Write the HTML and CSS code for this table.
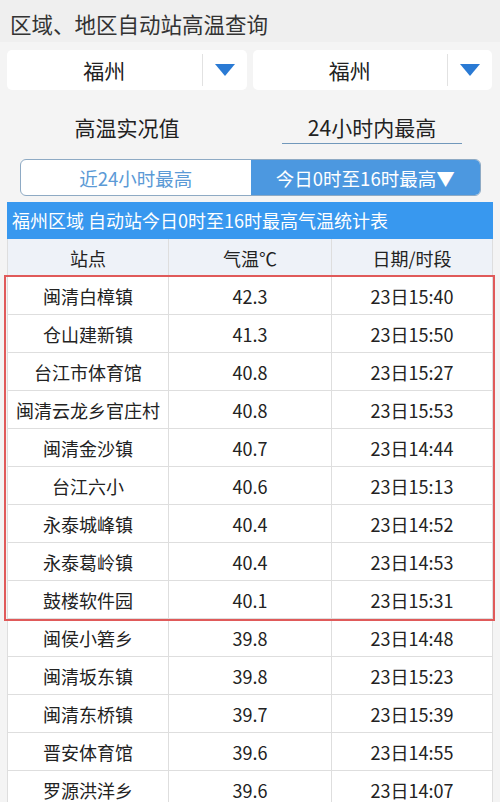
FILE: index.html
```html
<!DOCTYPE html>
<html lang="zh">
<head>
<meta charset="utf-8">
<link rel="stylesheet" href="styles.css">
</head>
<body>
<div class="title">区域、地区自动站高温查询</div>
<div class="selects">
  <div class="select"><span class="sel-text">福州</span><span class="sel-btn"><svg width="20" height="12" viewBox="0 0 20 12"><polygon points="0,0 20,0 10,12" fill="#2a7ad4"/></svg></span></div>
  <div class="select"><span class="sel-text">福州</span><span class="sel-btn"><svg width="20" height="12" viewBox="0 0 20 12"><polygon points="0,0 20,0 10,12" fill="#2a7ad4"/></svg></span></div>
</div>
<div class="tabs">
  <div class="tab">高温实况值</div>
  <div class="tab active">24小时内最高</div>
</div>
<div class="segment">
  <div class="seg">近24小时最高</div>
  <div class="seg on">今日0时至16时最高▼</div>
</div>
<div class="table-wrap">
  <div class="caption">福州区域 自动站今日0时至16时最高气温统计表</div>
  <div class="row head"><div>站点</div><div>气温℃</div><div>日期/时段</div></div>
  <div class="row"><div>闽清白樟镇</div><div>42.3</div><div>23日15:40</div></div>
  <div class="row"><div>仓山建新镇</div><div>41.3</div><div>23日15:50</div></div>
  <div class="row"><div>台江市体育馆</div><div>40.8</div><div>23日15:27</div></div>
  <div class="row"><div>闽清云龙乡官庄村</div><div>40.8</div><div>23日15:53</div></div>
  <div class="row"><div>闽清金沙镇</div><div>40.7</div><div>23日14:44</div></div>
  <div class="row"><div>台江六小</div><div>40.6</div><div>23日15:13</div></div>
  <div class="row"><div>永泰城峰镇</div><div>40.4</div><div>23日14:52</div></div>
  <div class="row"><div>永泰葛岭镇</div><div>40.4</div><div>23日14:53</div></div>
  <div class="row"><div>鼓楼软件园</div><div>40.1</div><div>23日15:31</div></div>
  <div class="row"><div>闽侯小箬乡</div><div>39.8</div><div>23日14:48</div></div>
  <div class="row"><div>闽清坂东镇</div><div>39.8</div><div>23日15:23</div></div>
  <div class="row"><div>闽清东桥镇</div><div>39.7</div><div>23日15:39</div></div>
  <div class="row"><div>晋安体育馆</div><div>39.6</div><div>23日14:55</div></div>
  <div class="row"><div>罗源洪洋乡</div><div>39.6</div><div>23日14:07</div></div>
  <div class="highlight"></div>
</div>
</body>
</html>
```
FILE: styles.css
```css
html, body {
  margin: 0;
  padding: 0;
  background: #f4f4f4;
  font-family: "Noto Sans CJK SC", "Noto Sans", sans-serif;
  color: #222;
  overflow: hidden;
}
.title {
  height: 42px;
  box-sizing: border-box;
  padding: 5px 0 0 10px;
  display: flex;
  align-items: center;
  font-size: 21.5px;
  color: #333;
  background: #efefef;
}
.selects {
  display: flex;
  gap: 6px;
  padding: 8px 8px 0 7px;
}
.select {
  flex: 1;
  height: 40px;
  background: #fff;
  border-radius: 5px;
  display: flex;
  align-items: center;
}
.sel-text {
  flex: 1;
  text-align: center;
  font-size: 21px;
  color: #222;
}
.sel-btn {
  width: 44px;
  height: 32px;
  border-left: 1px solid #e2e2e2;
  display: flex;
  align-items: center;
  justify-content: center;
}
.tabs {
  display: flex;
  align-items: flex-start;
  height: 60px;
}
.tab {
  height: 52px;
  box-sizing: border-box;
  padding-top: 24px;
  line-height: 26px;
  text-align: center;
  font-size: 21px;
  color: #222;
}
.tab:first-child {
  width: 254px;
}
.active {
  width: 180px;
  margin-left: 28px;
  height: 54px;
  border-bottom: 1.5px solid #7198bb;
}
.segment {
  display: flex;
  margin: 9px 19px 0 20px;
  height: 35px;
  border: 1px solid #8eaac4;
  border-radius: 6px;
  overflow: hidden;
  background: #fff;
}
.seg {
  flex: 1;
  display: flex;
  align-items: center;
  justify-content: center;
  font-size: 18.5px;
  color: #5b9ad6;
}
.seg.on {
  background: #4c98e0;
  color: #fff;
}
.table-wrap {
  position: relative;
  margin: 6px 7px 0 7px;
}
.caption {
  height: 37px;
  line-height: 37px;
  background: #3898ef;
  color: #fff;
  font-size: 18px;
  padding-left: 5px;
}
.row {
  display: grid;
  grid-template-columns: 161px 163px 1fr;
  height: 38px;
  background: #fff;
  border-bottom: 1px solid #dedede;
  box-sizing: border-box;
}
.row > div {
  display: flex;
  align-items: center;
  justify-content: center;
  font-size: 18px;
  color: #222;
  border-left: 1px solid #dedede;
}
.row > div:last-child {
  border-right: 1px solid #dedede;
}
.row.head {
  background: #eef2f8;
}
.highlight {
  position: absolute;
  left: -3px;
  right: -2px;
  top: 73px;
  height: 346px;
  border: 2px solid #e05a5a;
  box-sizing: border-box;
  pointer-events: none;
}
```
